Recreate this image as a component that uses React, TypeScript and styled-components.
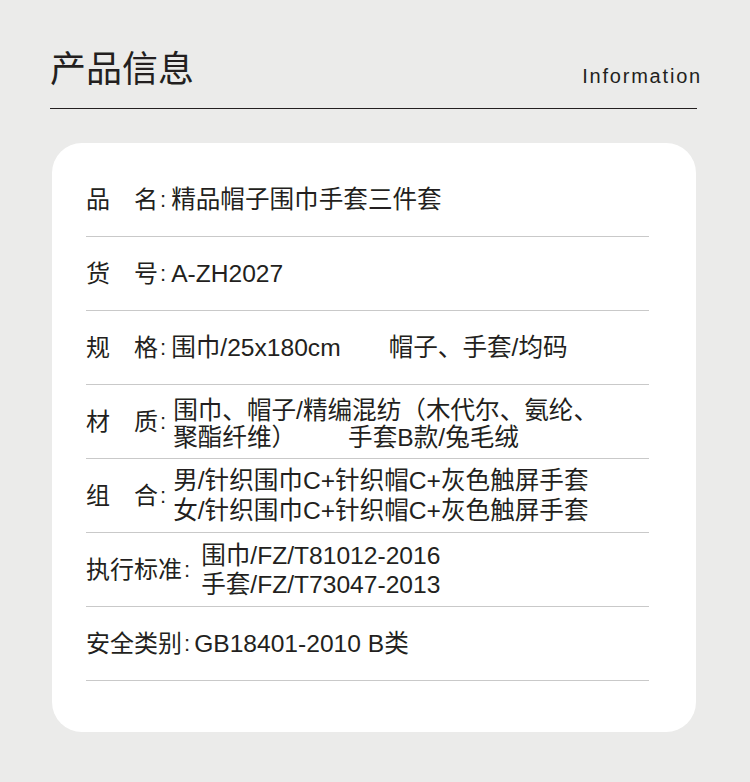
import styled, { createGlobalStyle } from 'styled-components'

const GlobalStyle = createGlobalStyle`
  body {
    margin: 0;
    background: #ebebea;
    font-family: 'Liberation Sans', 'Noto Sans CJK SC', sans-serif;
    color: #231f20;
  }
`

const Page = styled.div`
  width: 750px;
  height: 782px;
  background: #ebebea;
  overflow: hidden;
`

const Header = styled.header`
  display: flex;
  justify-content: space-between;
  align-items: flex-end;
  margin: 0 53px 0 50px;
  padding: 50px 0 18px;
  border-bottom: 1px solid #231f20;
`

const Title = styled.h1`
  margin: 0;
  font-size: 36px;
  line-height: 40px;
  font-weight: 400;
  letter-spacing: 0;
`

const Subtitle = styled.span`
  font-size: 20px;
  line-height: 24px;
  letter-spacing: 1.8px;
  padding-bottom: 2px;
  margin-right: -5px;
`

const Card = styled.section`
  margin: 34px 54px 0 52px;
  height: 589px;
  box-sizing: border-box;
  padding: 20px 47px 0 34px;
  background: #fff;
  border-radius: 30px;
`

const Row = styled.div`
  display: flex;
  align-items: center;
  height: 73px;
  border-bottom: 1px solid #c9c9c9;
  font-size: 24px;
`

const Label = styled.span`
  white-space: pre;
  line-height: 30px;
`

const Colon = styled.span<{ $after?: number }>`
  margin: 0 ${(p) => p.$after ?? 6}px 0 2px;
  font-size: 22px;
  line-height: 30px;
`

const Value = styled.div<{ $lh?: number; $shift?: number }>`
  display: flex;
  flex-direction: column;
  font-size: 24.6px;
  line-height: ${(p) => p.$lh ?? 30}px;
  white-space: pre;
  padding-top: ${(p) => p.$shift ?? 0}px;
`

const Spacer = styled.span<{ $w: number }>`
  display: inline-block;
  width: ${(p) => p.$w}px;
`

export default function App() {
  return (
    <Page>
      <GlobalStyle />
      <Header>
        <Title>产品信息</Title>
        <Subtitle>Information</Subtitle>
      </Header>
      <Card>
        <Row>
          <Label>品{'\u3000'}名</Label>
          <Colon $after={5}>:</Colon>
          <Value>精品帽子围巾手套三件套</Value>
        </Row>
        <Row>
          <Label>货{'\u3000'}号</Label>
          <Colon $after={5}>:</Colon>
          <Value>A-ZH2027</Value>
        </Row>
        <Row>
          <Label>规{'\u3000'}格</Label>
          <Colon $after={5}>:</Colon>
          <Value>
            <span>
              围巾/25x180cm<Spacer $w={48} />帽子、手套/均码
            </span>
          </Value>
        </Row>
        <Row>
          <Label>材{'\u3000'}质</Label>
          <Colon $after={7}>:</Colon>
          <Value $lh={27} $shift={4}>
            <span>围巾、帽子/精编混纺（木代尔、氨纶、</span>
            <span>
              聚酯纤维）<Spacer $w={52} />手套B款/兔毛绒
            </span>
          </Value>
        </Row>
        <Row>
          <Label>组{'\u3000'}合</Label>
          <Colon $after={7}>:</Colon>
          <Value $lh={30}>
            <span>男/针织围巾C+针织帽C+灰色触屏手套</span>
            <span>女/针织围巾C+针织帽C+灰色触屏手套</span>
          </Value>
        </Row>
        <Row>
          <Label>执行标准</Label>
          <Colon $after={11}>:</Colon>
          <Value $lh={29}>
            <span>围巾/FZ/T81012-2016</span>
            <span>手套/FZ/T73047-2013</span>
          </Value>
        </Row>
        <Row>
          <Label>安全类别</Label>
          <Colon $after={4}>:</Colon>
          <Value>GB18401-2010 B类</Value>
        </Row>
      </Card>
    </Page>
  )
}
